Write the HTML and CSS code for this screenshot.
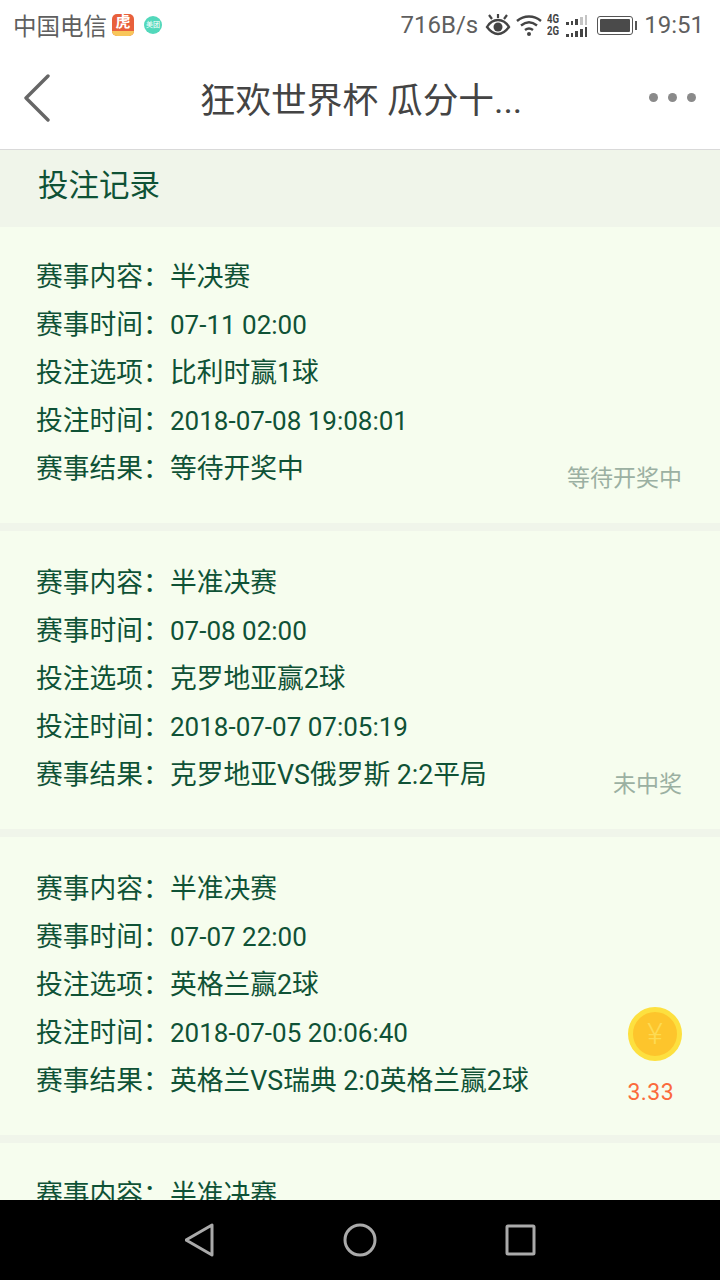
FILE: index.html
```html
<!DOCTYPE html>
<html lang="zh-CN">
<head>
    <meta charset="UTF-8">
    <title>投注记录</title>
    <link rel="stylesheet" href="styles.css">
</head>
<body>
    <div class="status-bar">
        <div class="status-left">
            <span class="carrier">中国电信</span>
            <span class="app-hu"><span class="app-hu-text">虎</span><span class="app-hu-strip"></span></span>
            <span class="app-mt">美团</span>
        </div>
        <div class="status-right">
            <span class="speed">716B/s</span>
            <svg class="icon-eye" width="26" height="24" viewBox="0 0 26 24" fill="none" stroke="#444">
                <path d="M2 14c3-5 7-7 11-7s8 2 11 7c-3 4-7 7-11 7s-8-3-11-7z" stroke-width="2.4"/>
                <circle cx="13" cy="14" r="4.5" fill="#444" stroke="none"/>
                <path d="M4 2l3 4M13 1v4M22 2l-3 4" stroke-width="2.2"/>
            </svg>
            <svg class="icon-wifi" width="26" height="24" viewBox="0 0 26 24" fill="none" stroke="#444" stroke-width="2.4">
                <path d="M1 8c7-6 17-6 24 0"/>
                <path d="M5 12.500c5-4 11-4 16 0"/>
                <path d="M9 17c2.500-2 5.500-2 8 0"/>
                <circle cx="13" cy="21" r="2" fill="#444" stroke="none"/>
            </svg>
            <div class="signal">
                <div class="signal-row">
                    <span class="signal-name">4G</span>
                    <i class="bar b1"></i><i class="bar b2"></i><i class="bar b3"></i>
                    <i class="bar b4 off"></i><i class="bar b5 off"></i>
                </div>
                <div class="signal-row">
                    <span class="signal-name">2G</span>
                    <i class="bar b1"></i><i class="bar b2"></i><i class="bar b3"></i>
                    <i class="bar b4"></i><i class="bar b5"></i>
                </div>
            </div>
            <div class="battery"><div class="battery-body"><div class="battery-fill"></div></div><div class="battery-nub"></div></div>
            <span class="clock">19:51</span>
        </div>
    </div>

    <header class="top-bar">
        <svg class="back" width="28" height="48" viewBox="0 0 28 48" fill="none" stroke="#666" stroke-width="3.400" stroke-linecap="round" stroke-linejoin="round">
            <path d="M25 2L3 24l22 22"/>
        </svg>
        <div class="page-title">狂欢世界杯 瓜分十...</div>
        <div class="more"><i></i><i></i><i></i></div>
    </header>

    <div class="section-title">投注记录</div>

    <div class="record-list">
        <div class="record">
            <div class="record-info">
                <div class="row"><span class="label">赛事内容：</span>半决赛</div>
                <div class="row"><span class="label">赛事时间：</span><span class="num">07-11 02:00</span></div>
                <div class="row"><span class="label">投注选项：</span>比利时赢1球</div>
                <div class="row"><span class="label">投注时间：</span><span class="num">2018-07-08 19:08:01</span></div>
                <div class="row"><span class="label">赛事结果：</span>等待开奖中</div>
            </div>
            <div class="record-state">等待开奖中</div>
        </div>
        <div class="record">
            <div class="record-info">
                <div class="row"><span class="label">赛事内容：</span>半准决赛</div>
                <div class="row"><span class="label">赛事时间：</span><span class="num">07-08 02:00</span></div>
                <div class="row"><span class="label">投注选项：</span>克罗地亚赢2球</div>
                <div class="row"><span class="label">投注时间：</span><span class="num">2018-07-07 07:05:19</span></div>
                <div class="row"><span class="label">赛事结果：</span>克罗地亚VS俄罗斯 2:2平局</div>
            </div>
            <div class="record-state">未中奖</div>
        </div>
        <div class="record">
            <div class="record-info">
                <div class="row"><span class="label">赛事内容：</span>半准决赛</div>
                <div class="row"><span class="label">赛事时间：</span><span class="num">07-07 22:00</span></div>
                <div class="row"><span class="label">投注选项：</span>英格兰赢2球</div>
                <div class="row"><span class="label">投注时间：</span><span class="num">2018-07-05 20:06:40</span></div>
                <div class="row"><span class="label">赛事结果：</span>英格兰VS瑞典 2:0英格兰赢2球</div>
            </div>
            <div class="record-prize">
                <div class="coin">¥</div>
                <div class="prize-amount">3.33</div>
            </div>
        </div>
        <div class="record">
            <div class="record-info">
                <div class="row"><span class="label">赛事内容：</span>半准决赛</div>
            </div>
        </div>
    </div>

    <div class="nav-bar">
        <svg width="30" height="36" viewBox="0 0 30 36" fill="none" stroke="#aaa" stroke-width="3" stroke-linejoin="round">
            <path d="M27 3v30L1 18z"/>
        </svg>
        <svg width="34" height="34" viewBox="0 0 34 34" fill="none" stroke="#aaa" stroke-width="3">
            <circle cx="17" cy="17" r="15"/>
        </svg>
        <svg width="32" height="32" viewBox="0 0 32 32" fill="none" stroke="#aaa" stroke-width="3" stroke-linejoin="round">
            <rect x="2" y="2" width="27" height="28" rx="1"/>
        </svg>
    </div>
</body>
</html>
```

FILE: styles.css
```css
* {
    box-sizing: border-box;
}
body {
    font-family: Roboto, "Noto Sans CJK SC", sans-serif;
    display: flex;
    flex-direction: column;
    width: 720px;
    height: 1280px;
    margin: 0;
    overflow: hidden;
    background: #f0f5ea;
}

/* status bar */
.status-bar {
    display: flex;
    justify-content: space-between;
    align-items: center;
    height: 48px;
    padding: 2px 16px 0 13px;
    background: white;
    color: #5f5f5f;
    font-size: 24px;
    flex-shrink: 0;
}
.status-left,
.status-right {
    display: flex;
    align-items: center;
}
.carrier {
    font-size: 23.500px;
    margin-right: 5px;
}
.app-hu {
    display: flex;
    flex-direction: column;
    align-items: center;
    justify-content: space-between;
    width: 22px;
    height: 22px;
    border-radius: 5px;
    background: #e8603c;
    overflow: hidden;
    margin-right: 10px;
}
.app-hu-text {
    font-size: 15px;
    line-height: 16px;
    color: #fff;
    font-weight: bold;
}
.app-hu-strip {
    width: 100%;
    height: 5px;
    background: #f8c65a;
}
.app-mt {
    display: block;
    width: 18px;
    height: 18px;
    border-radius: 50%;
    background: #52d8bb;
    color: #fff;
    font-size: 7px;
    line-height: 18px;
    text-align: center;
    white-space: nowrap;
}
.speed {
    margin-right: 7px;
}
.icon-wifi {
    margin: 0 5px 0 5px;
}
.signal {
    display: flex;
    flex-direction: column;
    width: 40px;
    margin-right: 10px;
}
.signal-row {
    display: flex;
    align-items: flex-end;
    gap: 2px;
    height: 12px;
}
.signal-name {
    font-size: 12px;
    line-height: 12px;
    font-weight: bold;
    color: #444;
    width: 15px;
    margin-right: 2px;
    transform: scaleX(0.8);
    transform-origin: left;
}
.bar {
    display: block;
    width: 3px;
    background: #444;
}
.bar.off {
    background: #c4c4c4;
}
.b1 { height: 3px; }
.b2 { height: 4px; }
.b3 { height: 6px; }
.b4 { height: 8px; }
.b5 { height: 10px; }
.battery {
    display: flex;
    align-items: center;
    margin-right: 7px;
}
.battery-body {
    width: 36px;
    height: 19px;
    border: 1px solid #555;
    border-radius: 3px;
    padding: 2px;
}
.battery-fill {
    height: 100%;
    background: #4a4a4a;
    border-radius: 1px;
}
.battery-nub {
    width: 2px;
    height: 9px;
    margin-left: 2px;
    background: #555;
}

/* title bar */
.top-bar {
    display: flex;
    justify-content: space-between;
    align-items: center;
    height: 102px;
    padding: 0 24px 0 23px;
    background: white;
    border-bottom: 1px solid #d9d9d9;
    flex-shrink: 0;
}
.back {
    margin-top: -1px;
}
.page-title {
    font-size: 35.700px;
    color: #444;
    white-space: nowrap;
    margin: -2px 0 0 22px;
}
.more {
    display: flex;
    gap: 10px;
    margin-top: -3px;
}
.more i {
    display: block;
    width: 9px;
    height: 9px;
    border-radius: 50%;
    background: #8a8a8a;
}

.section-title {
    height: 77px;
    line-height: 72px;
    padding-left: 38px;
    font-size: 30.500px;
    color: #0f5236;
    flex-shrink: 0;
}

/* records */
.record-list {
    flex: 1;
    min-height: 0;
    overflow: hidden;
}
.record {
    display: flex;
    justify-content: space-between;
    align-items: flex-end;
    padding: 28px 38px 28px 36px;
    margin-bottom: 8px;
    background: #f6fdee;
    color: #0f5236;
}
.record:first-child {
    padding-top: 26px;
}
.record-info {
    margin-bottom: 2px;
}
.row {
    display: flex;
    height: 48px;
    line-height: 48px;
    font-size: 26.750px;
    white-space: nowrap;
}
.label {
    width: 134px;
}
.num {
    font-size: 26px;
}
.record-state {
    font-size: 23px;
    line-height: 32px;
    color: #9bb0a2;
}
.record-prize {
    display: flex;
    flex-direction: column;
    align-items: flex-end;
}
.coin {
    width: 54px;
    height: 54px;
    border: 5px solid #fde03f;
    border-radius: 50%;
    background: #fdc52c;
    color: #fddb53;
    font-size: 30px;
    font-weight: 300;
    line-height: 44px;
    text-align: center;
}
.prize-amount {
    font-size: 23px;
    line-height: 28px;
    color: #fb6a3c;
    margin: 18px 8px 0 0;
    letter-spacing: 0.4px;
}

.nav-bar {
    display: flex;
    justify-content: center;
    align-items: center;
    gap: 128px;
    height: 80px;
    padding-left: 2px;
    background: black;
    flex-shrink: 0;
}
```
